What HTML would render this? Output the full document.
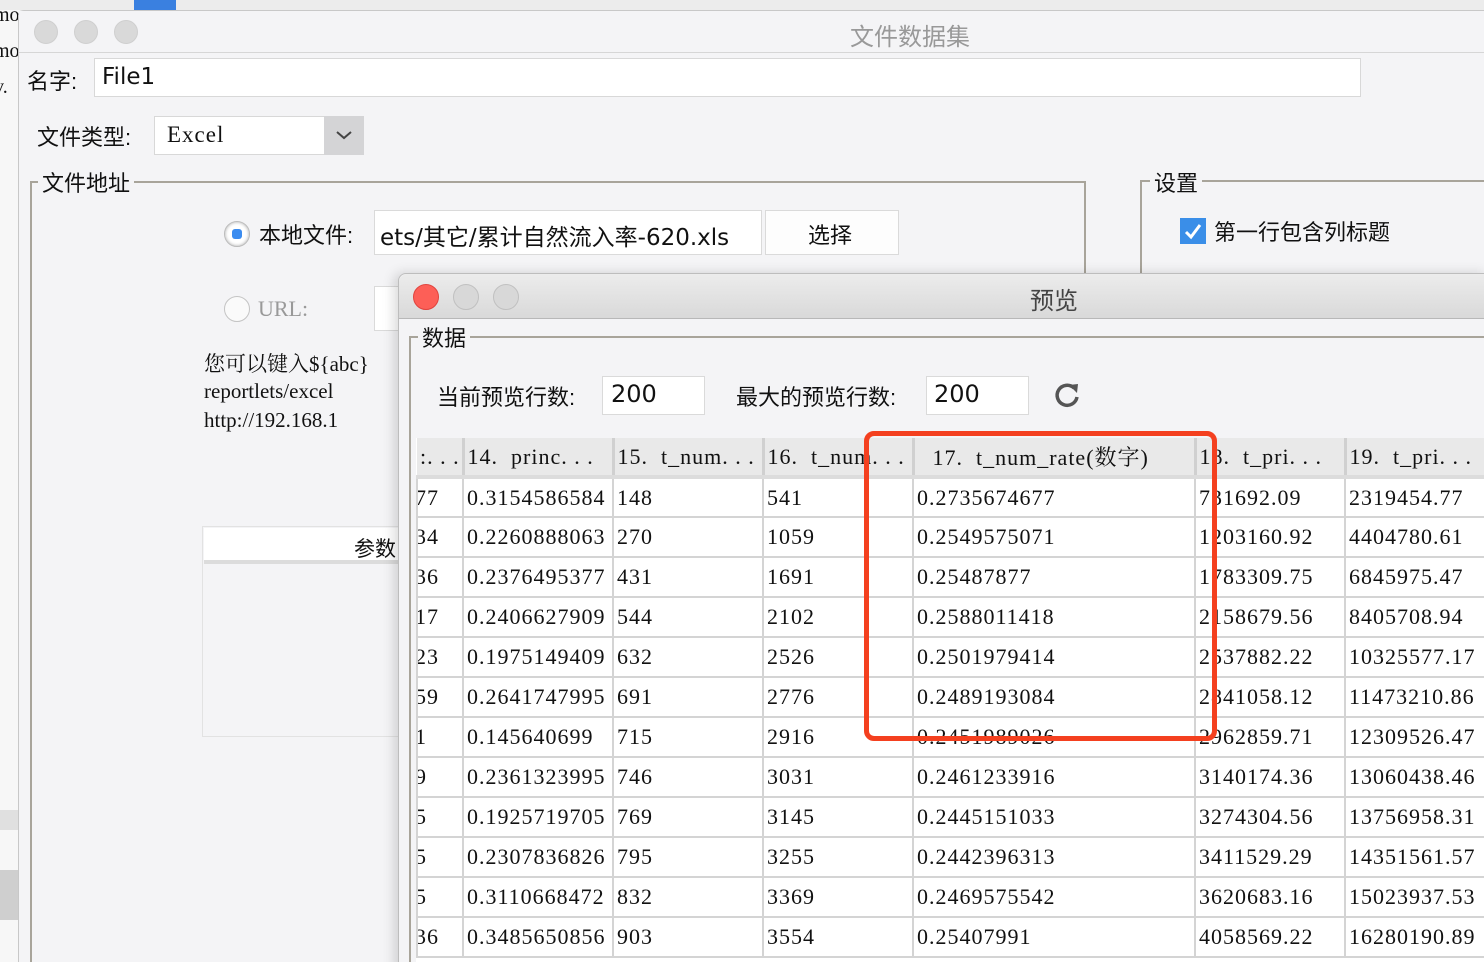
<!DOCTYPE html>
<html style="overflow:hidden;width:1484px;height:962px"><head><meta charset="utf-8">
<style>
*{margin:0;padding:0;box-sizing:border-box}
body{width:1484px;height:962px;overflow:hidden;background:#e8e8e8;position:relative;font-family:"Liberation Sans","Noto Sans CJK SC",sans-serif;color:#111}
.a{position:absolute}
.serif{font-family:"Liberation Serif","Noto Serif CJK SC",serif}
.cjk{font-family:"Liberation Sans","Noto Sans CJK SC",sans-serif}
.dot{position:absolute;width:24px;height:24px;border-radius:50%;background:#d9d9d9;border:1px solid #cfcfcf}
table{border-collapse:collapse;table-layout:fixed}
td{height:40px;border:2px solid #d4d4d4;background:#fff;font-family:"Liberation Serif","Noto Serif CJK SC",serif;font-size:22px;letter-spacing:1px;padding-left:3px;white-space:nowrap;overflow:hidden;vertical-align:middle}
th{height:39px;background:#e9e9e9;font-weight:normal;text-align:left;font-family:"Liberation Serif","Noto Serif CJK SC",serif;font-size:22px;letter-spacing:1px;padding-left:3px;white-space:nowrap;overflow:hidden;border-right:3px solid #d0d0d0;border-bottom:4px solid #dcdcdc}
td.f{text-indent:-6px}
</style></head><body>
<div class="a" style="left:0;top:0;width:1484px;height:962px;overflow:hidden">
<div class="a" style="left:0;top:0;width:20px;height:962px;background:#f7f7f7"></div>
<div class="a serif" style="left:-6px;top:4px;font-size:20px">mo</div>
<div class="a serif" style="left:-6px;top:40px;font-size:20px">mo</div>
<div class="a serif" style="left:-6px;top:76px;font-size:20px">v.</div>
<div class="a" style="left:0;top:810px;width:18px;height:20px;background:#e0e0e0"></div>
<div class="a" style="left:0;top:870px;width:18px;height:50px;background:#cfcfcf"></div>
<div class="a" style="left:0;top:0;width:1484px;height:10px;background:#ececec"></div>
<div class="a" style="left:134px;top:0;width:42px;height:10px;background:#3a80e0"></div>

<div class="a" style="left:18px;top:10px;width:1466px;height:952px;background:#f4f4f6;border-left:1px solid #c8c8c8;border-top:1px solid #c8c8c8;border-radius:6px 0 0 0"></div>
<div class="a" style="left:19px;top:11px;width:1465px;height:42px;background:#f4f4f6;border-bottom:1px solid #d6d6d6"></div>
<div class="dot" style="left:34px;top:20px"></div>
<div class="dot" style="left:74px;top:20px"></div>
<div class="dot" style="left:114px;top:20px"></div>
<div class="a cjk" style="left:850px;top:17px;font-size:24px;color:#999">文件数据集</div>

<div class="a cjk" style="left:27px;top:64px;font-size:22px">名字:</div>
<div class="a" style="left:94px;top:58px;width:1267px;height:39px;background:#fff;border:1px solid #d8d8d8"></div>
<div class="a" style="left:102px;top:64px;font-size:23px;font-family:'DejaVu Sans',sans-serif">File1</div>

<div class="a cjk" style="left:37px;top:120px;font-size:22px">文件类型:</div>
<div class="a" style="left:154px;top:116px;width:210px;height:39px;background:#fff;border:1px solid #d8d8d8"></div>
<div class="a" style="left:324px;top:116px;width:40px;height:39px;background:#d4d4d6"></div>
<svg class="a" style="left:336px;top:130px" width="16" height="10"><path d="M1 2 L8 8 L15 2" stroke="#444" stroke-width="2" fill="none"/></svg>
<div class="a serif" style="left:167px;top:122px;font-size:23px;letter-spacing:1px">Excel</div>

<div class="a" style="left:30px;top:181px;width:1056px;height:800px;border:2px solid #a8a49a;border-bottom:none"></div>
<div class="a cjk" style="left:38px;top:166px;font-size:22px;background:#f4f4f6;padding:0 4px">文件地址</div>
<div class="a" style="left:224px;top:221px;width:26px;height:26px;border-radius:50%;background:#fff;border:1px solid #bbb;box-shadow:inset 0 0 3px #aaa"></div>
<div class="a" style="left:232px;top:229px;width:10px;height:10px;border-radius:3px;background:#3b8cf0"></div>
<div class="a cjk" style="left:259px;top:218px;font-size:22px">本地文件:</div>
<div class="a" style="left:374px;top:210px;width:388px;height:45px;background:#fff;border:1px solid #dadada"></div>
<div class="a" style="left:380px;top:218px;font-size:23px;font-family:'DejaVu Sans','Noto Sans CJK SC',sans-serif;white-space:nowrap">ets/其它/累计自然流入率-620.xls</div>
<div class="a" style="left:765px;top:210px;width:134px;height:45px;background:#fdfdfd;border:1px solid #dadada"></div>
<div class="a cjk" style="left:808px;top:218px;font-size:22px">选择</div>
<div class="a" style="left:224px;top:296px;width:26px;height:26px;border-radius:50%;background:#fafafa;border:1px solid #c4c4c4"></div>
<div class="a serif" style="left:258px;top:296px;font-size:22px;color:#999">URL:</div>
<div class="a" style="left:374px;top:286px;width:40px;height:45px;background:#fff;border:1px solid #dadada"></div>
<div class="a serif" style="left:204px;top:348px;font-size:21px;white-space:nowrap">您可以键入${abc}</div>
<div class="a serif" style="left:204px;top:379px;font-size:21px">reportlets/excel</div>
<div class="a serif" style="left:204px;top:408px;font-size:21px">http://192.168.1</div>
<div class="a" style="left:202px;top:526px;width:200px;height:211px;border:1px solid #e2e2e2;background:#f4f4f6"></div>
<div class="a" style="left:204px;top:528px;width:198px;height:36px;background:#fff;border-bottom:4px solid #dcdcdc"></div>
<div class="a cjk" style="left:354px;top:533px;font-size:21px">参数</div>

<div class="a" style="left:1140px;top:180px;width:360px;height:100px;border:2px solid #a8a49a;border-bottom:none;border-right:none"></div>
<div class="a cjk" style="left:1150px;top:166px;font-size:22px;background:#f4f4f6;padding:0 4px">设置</div>
<div class="a" style="left:1180px;top:218px;width:26px;height:26px;background:#3a8ee8"></div>
<svg class="a" style="left:1182px;top:220px" width="22" height="22"><path d="M4 12 L9 17 L18 5" stroke="#fff" stroke-width="3" fill="none"/></svg>
<div class="a cjk" style="left:1214px;top:215px;font-size:22px">第一行包含列标题</div>

<div class="a" style="left:398px;top:273px;width:1090px;height:700px;background:#f4f4f6;border:1px solid #bdbdbd;border-radius:8px 0 0 0;box-shadow:-4px 0 12px rgba(0,0,0,0.15)"></div>
<div class="a" style="left:399px;top:274px;width:1085px;height:45px;background:linear-gradient(#ececec,#d9d9d9);border-bottom:1px solid #b8b8b8;border-radius:8px 0 0 0"></div>
<div class="a" style="left:413px;top:284px;width:26px;height:26px;border-radius:50%;background:#fd5f57;border:1px solid #e0443e"></div>
<div class="dot" style="left:453px;top:284px;width:26px;height:26px;background:#d8d8d8;border-color:#c0c0c0"></div>
<div class="dot" style="left:493px;top:284px;width:26px;height:26px;background:#d8d8d8;border-color:#c0c0c0"></div>
<div class="a cjk" style="left:1030px;top:281px;font-size:24px;color:#444">预览</div>

<div class="a" style="left:409px;top:336px;width:1080px;height:640px;border:2px solid #a8a49a;border-right:none;border-bottom:none"></div>
<div class="a cjk" style="left:418px;top:321px;font-size:22px;background:#f4f4f6;padding:0 4px">数据</div>
<div class="a cjk" style="left:437px;top:380px;font-size:22px">当前预览行数:</div>
<div class="a" style="left:602px;top:376px;width:103px;height:39px;background:#fff;border:1px solid #dadada"></div>
<div class="a" style="left:611px;top:380px;font-size:24px;font-family:'DejaVu Sans',sans-serif">200</div>
<div class="a cjk" style="left:736px;top:380px;font-size:22px">最大的预览行数:</div>
<div class="a" style="left:926px;top:376px;width:103px;height:39px;background:#fff;border:1px solid #dadada"></div>
<div class="a" style="left:934px;top:380px;font-size:24px;font-family:'DejaVu Sans',sans-serif">200</div>
<svg class="a" style="left:1052px;top:381px" width="30" height="30"><path d="M22 7 A10 10 0 1 0 25 16" stroke="#555" stroke-width="3.5" fill="none"/><path d="M17 4 L26 3 L25 12 Z" fill="#555"/></svg>

<div class="a" style="left:416px;top:438px;width:1068px;height:524px;overflow:hidden;background:#fff">
<table style="width:1120px">
<colgroup><col style="width:46px"><col style="width:150px"><col style="width:150px"><col style="width:150px"><col style="width:282px"><col style="width:150px"><col style="width:192px"></colgroup>
<tr><th>:. . .</th><th>14. &nbsp;princ. . .</th><th>15. &nbsp;t_num. . .</th><th>16. &nbsp;t_num. . .</th><th style="padding-left:18px">17. &nbsp;t_num_rate(数字)</th><th>18. &nbsp;t_pri. . .</th><th>19. &nbsp;t_pri. . .</th></tr>
<tr><td class="f">77</td><td>0.3154586584</td><td>148</td><td>541</td><td>0.2735674677</td><td>731692.09</td><td>2319454.77</td></tr>
<tr><td class="f">34</td><td>0.2260888063</td><td>270</td><td>1059</td><td>0.2549575071</td><td>1203160.92</td><td>4404780.61</td></tr>
<tr><td class="f">36</td><td>0.2376495377</td><td>431</td><td>1691</td><td>0.25487877</td><td>1783309.75</td><td>6845975.47</td></tr>
<tr><td class="f">17</td><td>0.2406627909</td><td>544</td><td>2102</td><td>0.2588011418</td><td>2158679.56</td><td>8405708.94</td></tr>
<tr><td class="f">23</td><td>0.1975149409</td><td>632</td><td>2526</td><td>0.2501979414</td><td>2537882.22</td><td>10325577.17</td></tr>
<tr><td class="f">59</td><td>0.2641747995</td><td>691</td><td>2776</td><td>0.2489193084</td><td>2841058.12</td><td>11473210.86</td></tr>
<tr><td class="f">1</td><td>0.145640699</td><td>715</td><td>2916</td><td>0.2451989026</td><td>2962859.71</td><td>12309526.47</td></tr>
<tr><td class="f">9</td><td>0.2361323995</td><td>746</td><td>3031</td><td>0.2461233916</td><td>3140174.36</td><td>13060438.46</td></tr>
<tr><td class="f">5</td><td>0.1925719705</td><td>769</td><td>3145</td><td>0.2445151033</td><td>3274304.56</td><td>13756958.31</td></tr>
<tr><td class="f">5</td><td>0.2307836826</td><td>795</td><td>3255</td><td>0.2442396313</td><td>3411529.29</td><td>14351561.57</td></tr>
<tr><td class="f">5</td><td>0.3110668472</td><td>832</td><td>3369</td><td>0.2469575542</td><td>3620683.16</td><td>15023937.53</td></tr>
<tr><td class="f">36</td><td>0.3485650856</td><td>903</td><td>3554</td><td>0.25407991</td><td>4058569.22</td><td>16280190.89</td></tr>
</table>
</div>

<div class="a" style="left:864px;top:431px;width:353px;height:310px;border:5px solid #f4401f;border-radius:10px"></div>
</div>
</body></html>
